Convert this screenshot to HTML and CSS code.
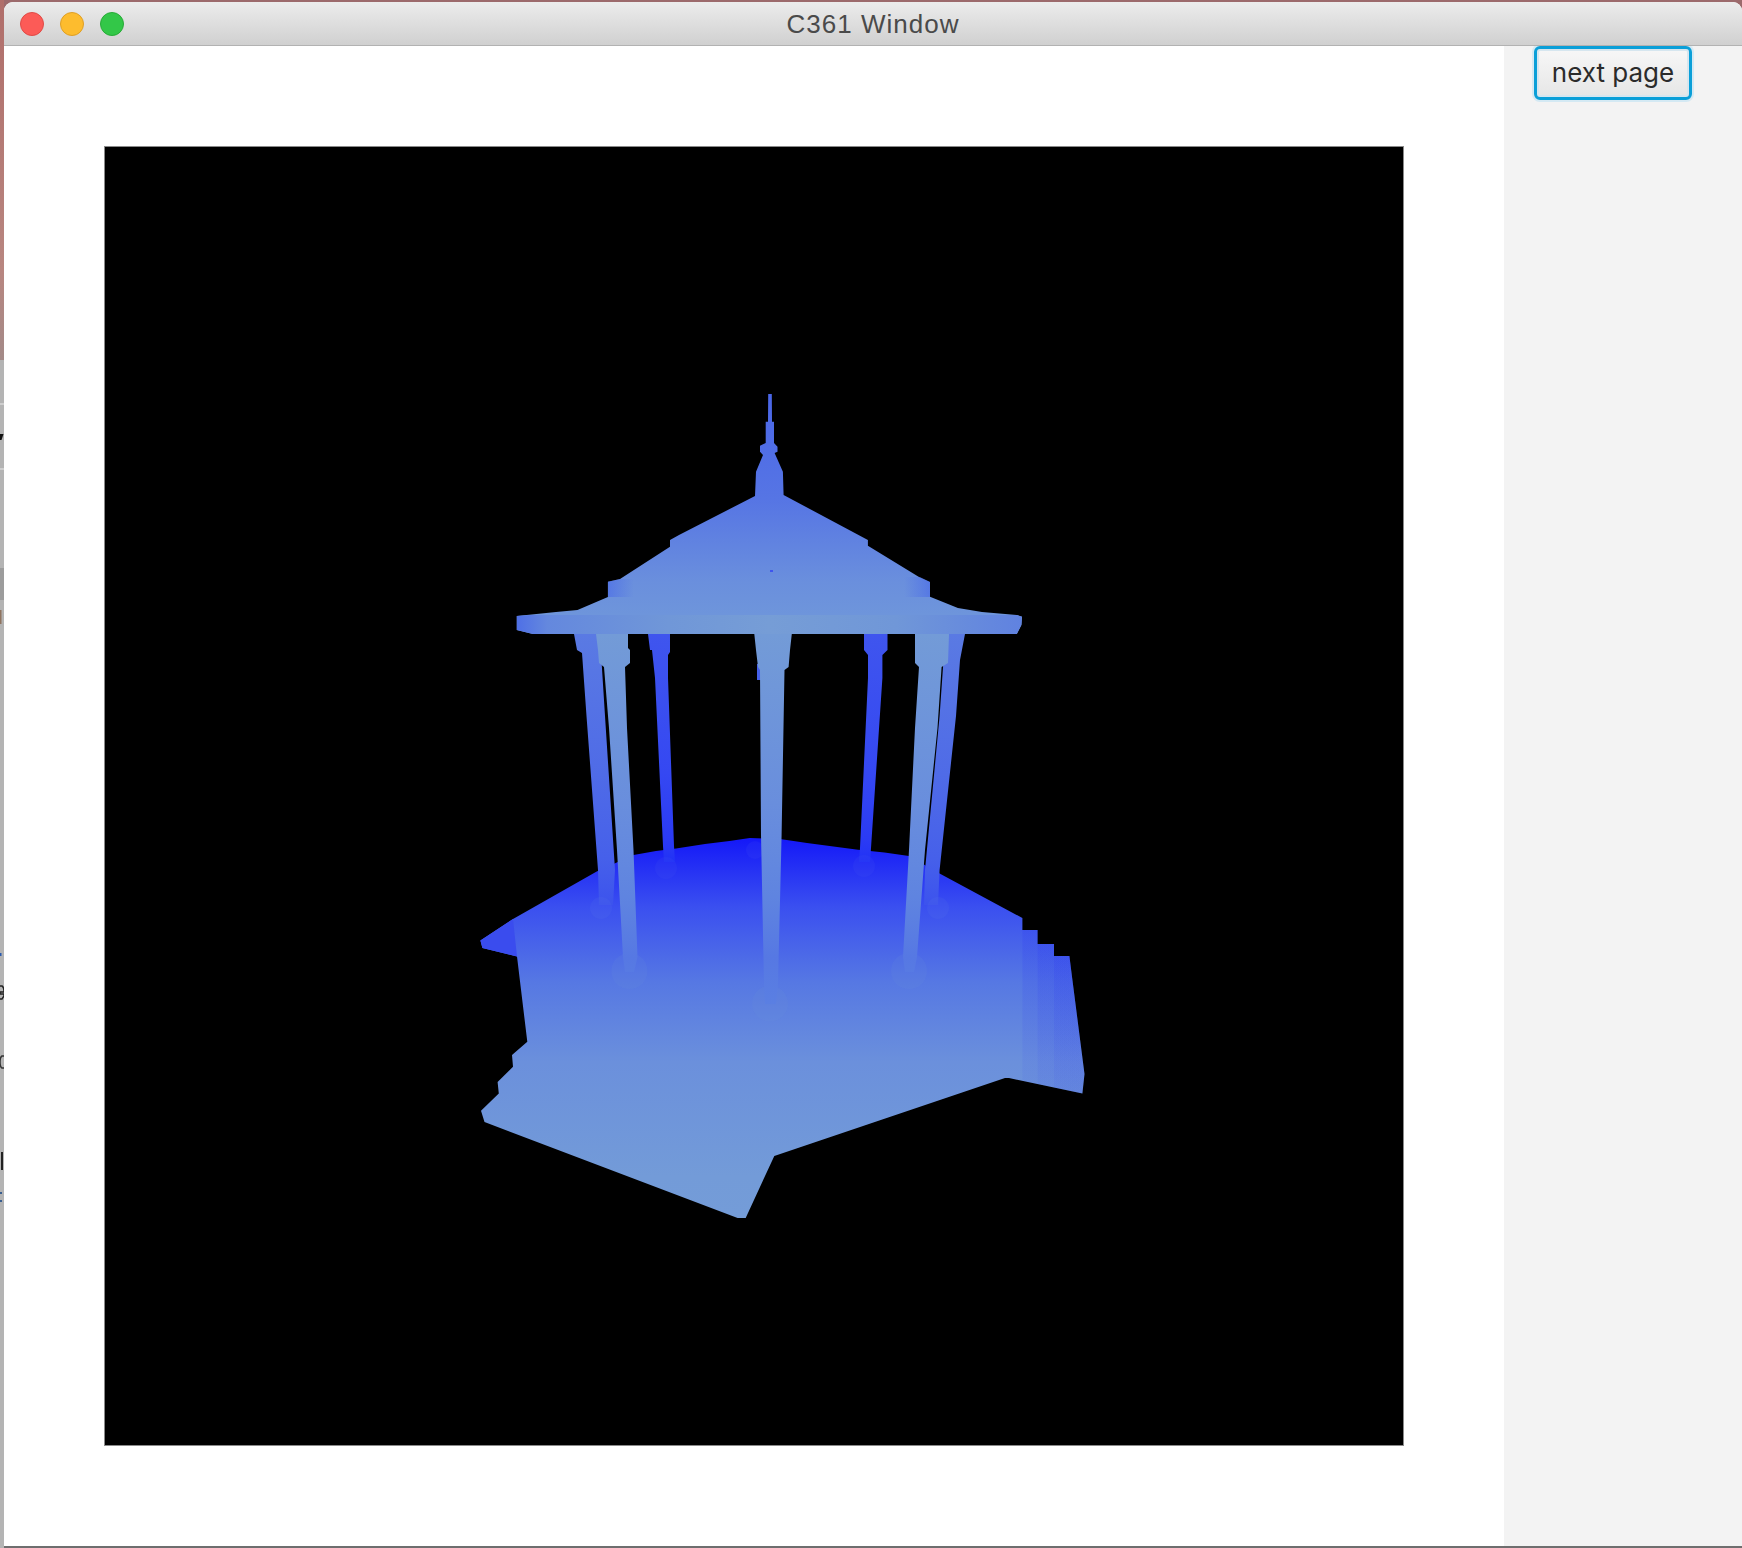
FILE: index.html
```html
<!DOCTYPE html>
<html lang="en">
<head>
<meta charset="utf-8">
<title>C361 Window</title>
<link rel="stylesheet" href="styles.css">
</head>
<body>
<svg class="backdrop" viewBox="0 0 4 1548" aria-hidden="true">
  <defs>
    <linearGradient id="deskRed" x1="0" y1="0" x2="0" y2="1">
      <stop offset="0" stop-color="#b06e6a"/><stop offset=".75" stop-color="#b88680"/><stop offset="1" stop-color="#a38a88"/>
    </linearGradient>
  </defs>
  <rect width="4" height="1548" fill="#b4b4b4"/>
  <rect width="4" height="360" fill="url(#deskRed)"/>
  <rect y="403" width="4" height="2" fill="#cfcfcf"/>
  <rect y="468" width="4" height="2" fill="#cfcfcf"/>
  <rect y="568" width="4" height="32" fill="#9c9c9c"/>
  <rect y="610" width="1.500" height="14" fill="#8f7460"/>
  <path d="M0 434h3.500l-2 6H0z" fill="#111"/>
  <rect y="953" width="1.500" height="3" fill="#2a5bb0"/>
  <path d="M0 986h2q2 1 2 6H0v2h4v2l-2 3H0" fill="none" stroke="#222" stroke-width="1.500"/>
  <path d="M4 1056h-2q-2 1 -2 6q0 5 2 6h2" fill="none" stroke="#333" stroke-width="1.500"/>
  <rect x="1" y="1152" width="2" height="18" fill="#222"/>
  <path d="M0 1192h2v2H0zM0 1200h2v2H0z" fill="#3a5f90"/>
</svg>

<div class="window">
  <header class="titlebar">
    <div class="lights">
      <span class="light light-close"></span>
      <span class="light light-min"></span>
      <span class="light light-max"></span>
    </div>
    <span class="title">C361 Window</span>
  </header>

  <div class="body">
    <main class="stage">
      <svg class="canvas" viewBox="104 146 1300 1300" role="img" aria-label="Depth rendering of a gazebo">
        <defs>
          <linearGradient id="ground" gradientUnits="userSpaceOnUse" x1="0" y1="838" x2="0" y2="1218">
            <stop offset="0" stop-color="#1418f8"/>
            <stop offset=".18" stop-color="#3a4ff0"/>
            <stop offset=".38" stop-color="#5678e3"/>
            <stop offset=".59" stop-color="#6b90dc"/>
            <stop offset=".89" stop-color="#739bd8"/>
            <stop offset="1" stop-color="#749cd8"/>
          </linearGradient>
          <linearGradient id="stepShade" gradientUnits="userSpaceOnUse" x1="0" y1="920" x2="0" y2="1095">
            <stop offset="0" stop-color="#1a1ff6" stop-opacity=".13"/>
            <stop offset="1" stop-color="#1a1ff6" stop-opacity=".04"/>
          </linearGradient>
          <linearGradient id="roof" gradientUnits="userSpaceOnUse" x1="0" y1="394" x2="0" y2="634">
            <stop offset="0" stop-color="#4a66e8"/>
            <stop offset=".44" stop-color="#5675e4"/>
            <stop offset=".78" stop-color="#6a8fdd"/>
            <stop offset=".92" stop-color="#6e95db"/>
            <stop offset="1" stop-color="#769dd6"/>
          </linearGradient>
          <linearGradient id="band" gradientUnits="userSpaceOnUse" x1="517" y1="0" x2="1022" y2="0">
            <stop offset="0" stop-color="#4f70e6"/>
            <stop offset=".06" stop-color="#6488de"/>
            <stop offset=".3" stop-color="#7097d8"/>
            <stop offset=".5" stop-color="#769dd6"/>
            <stop offset=".75" stop-color="#7097d8"/>
            <stop offset="1" stop-color="#6082e0"/>
          </linearGradient>
          <linearGradient id="rim" gradientUnits="userSpaceOnUse" x1="608" y1="0" x2="930" y2="0">
            <stop offset="0" stop-color="#4565ea" stop-opacity=".55"/>
            <stop offset=".08" stop-color="#4565ea" stop-opacity="0"/>
            <stop offset=".92" stop-color="#4565ea" stop-opacity="0"/>
            <stop offset="1" stop-color="#4565ea" stop-opacity=".55"/>
          </linearGradient>
          <linearGradient id="colFront" gradientUnits="userSpaceOnUse" x1="0" y1="634" x2="0" y2="1010">
            <stop offset="0" stop-color="#739bd7"/>
            <stop offset=".45" stop-color="#698edd"/>
            <stop offset=".7" stop-color="#5f84e0"/>
            <stop offset=".86" stop-color="#5678e3"/>
            <stop offset="1" stop-color="#5b80e2"/>
          </linearGradient>
          <linearGradient id="colOuter" gradientUnits="userSpaceOnUse" x1="0" y1="634" x2="0" y2="915">
            <stop offset="0" stop-color="#5a7ae3"/>
            <stop offset=".5" stop-color="#4f6be7"/>
            <stop offset=".8" stop-color="#4660ea"/>
            <stop offset="1" stop-color="#3a50ee"/>
          </linearGradient>
          <linearGradient id="colBack" gradientUnits="userSpaceOnUse" x1="0" y1="634" x2="0" y2="865">
            <stop offset="0" stop-color="#3f55ee"/>
            <stop offset=".6" stop-color="#3548f2"/>
            <stop offset=".9" stop-color="#2a3af4"/>
            <stop offset="1" stop-color="#2030f6"/>
          </linearGradient>
        </defs>

        <!-- ground -->
        <polygon fill="url(#ground)" points="480.400,940.400 513,919 596.700,871.500 633.500,855 656,851 676,848.600 705,844 729.400,841 749.800,838 780,839 807,843 858,849.700 884.500,852.400 909,856 939.600,873.400 1022.400,918 1022.400,930 1037.600,930 1037.600,944 1054,944 1054,956 1069.400,956 1072,976.800 1084.500,1074 1082.400,1093.500 1009,1078 1005,1078 774.300,1155.900 745.700,1217.900 737.600,1217.900 484.500,1122 481,1110.700 498.800,1093.500 497.600,1082 513,1066.700 512,1055 527.300,1041.800 517,956.500 482.400,948"/>
        <polygon class="spike" points="480.400,940.400 513,919 517,956.500 482.400,948"/>
        <polygon fill="url(#stepShade)" points="1022.400,918 1022.400,930 1037.600,930 1037.600,944 1054,944 1054,956 1069.400,956 1072,976.800 1084.500,1074 1082.400,1093.500 1022.400,1080.700"/>
        <polygon fill="url(#stepShade)" points="1037.600,930 1037.600,944 1054,944 1054,956 1069.400,956 1072,976.800 1084.500,1074 1082.400,1093.500 1037.600,1084"/>
        <polygon fill="url(#stepShade)" points="1054,944 1054,956 1069.400,956 1072,976.800 1084.500,1074 1082.400,1093.500 1054,1087.500"/>

        <!-- rear columns -->
        <polygon fill="url(#colBack)" points="648,634 670,634 670,652 668,655 668,678 674,846 675,862 664,862 663,846 655,678 652,650 650,650"/>
        <polygon fill="url(#colBack)" points="864,634 887.500,634 887.500,650 882.400,655 882.400,678 871,848 870,862 859,862 860,848 868,678 868,655 864,650"/>
        <polygon fill="url(#colOuter)" points="574,634 597,634 601,653 605,716 615,870 613,905 599,905 598,870 586.500,716 582,653 577,650"/>
        <polygon fill="url(#colOuter)" points="948,634 965,634 960,660 956,716 939.600,870 938,905 924,905 925,870 939.600,716 944,653"/>
        <rect class="sliver" x="757" y="664" width="4" height="16"/>

        <!-- column feet, faint through the ground -->
        <circle class="foot foot-back" cx="666" cy="868" r="11"/>
        <circle class="foot foot-back" cx="864" cy="866" r="11"/>
        <circle class="foot foot-back" cx="755" cy="850" r="9"/>
        <circle class="foot foot-outer" cx="601" cy="908" r="11"/>
        <circle class="foot foot-outer" cx="938" cy="908" r="11"/>
        <circle class="foot" cx="629.400" cy="971" r="18"/>
        <circle class="foot" cx="909" cy="971" r="18"/>
        <circle class="foot" cx="770" cy="1003.600" r="18"/>

        <!-- front columns -->
        <polygon fill="url(#colFront)" points="596,634 628,634 628,648 630,650 630,663 625,667 627,728 633.500,850 637.500,957 634,972 625,972 623,957 617,850 609,728 604,667 599,663 598,650"/>
        <polygon fill="url(#colFront)" points="915,634 949,634 948,663 941.600,667 937.500,728 925,850 917,957 914,972 905,972 903,957 909,850 915,728 919,667 915,663"/>
        <polygon fill="url(#colFront)" points="754.300,634 791.800,634 790,650 788.600,667 784.500,670 781.600,835 778,984 776,1004 765,1004 764,984 761,835 760,670 758,667 756,650"/>

        <!-- roof -->
        <polygon fill="url(#roof)" points="768.200,394 771.800,394 772,421.700 774,421.700 774,443 777.500,446.700 777.500,451.700 774.600,453 782.900,471.700 783.600,495 867.900,540 867.900,545.700 918.600,576.700 930,582 930,596.700 957.900,608 982,612 1016.800,615 1022,616.700 1021.400,625 1016.800,634 532.900,634 516.800,630 516.800,616 556,612 577.500,610 607.900,597 607.900,581.700 620,579 670,546.700 670,540 679,535 755,496 756,471.700 763,455 760,451.700 760,445.700 765.700,443 765.700,421.700 768,421.700"/>
        <polygon fill="url(#rim)" points="608,581.700 620,579 920,577 930,582 930,597 608,597"/>
        <polygon fill="url(#band)" points="516.800,616 530,615 1016.800,615 1022,616.700 1021.400,625 1016.800,634 532.900,634 516.800,630"/>
        <rect class="speck" x="770" y="570" width="3" height="2"/>
      </svg>
    </main>

    <aside class="sidebar">
      <button class="next-button" type="button">next page</button>
    </aside>
  </div>
</div>
</body>
</html>
```

FILE: styles.css
```css
* {
  box-sizing: border-box;
}

html,
body {
  margin: 0;
  height: 1548px;
  overflow: hidden;
}

body {
  display: flex;
  background: #9c6a6c;
}

.backdrop {
  display: block;
  flex: none;
  width: 4px;
  height: 1548px;
}

.window {
  flex: 1;
  display: flex;
  flex-direction: column;
  margin-top: 2px;
  height: 1546px;
  border-radius: 9px 9px 0 0;
  overflow: hidden;
  background: #fff;
  border-bottom: 2px solid #6e6e6e;
}

.titlebar {
  flex: none;
  position: relative;
  display: flex;
  align-items: center;
  justify-content: center;
  height: 44px;
  padding-top: 2px;
  background: linear-gradient(#ececec, #d0d0d0);
  border-bottom: 1px solid #b2b2b2;
}

.lights {
  position: absolute;
  left: 16px;
  top: 10px;
  display: flex;
  gap: 16px;
}

.light {
  display: block;
  width: 24px;
  height: 24px;
  border-radius: 50%;
  border: 1px solid;
}

.light-close {
  background: #fc5b57;
  border-color: #e04a46;
}

.light-min {
  background: #fdbc2e;
  border-color: #df9f25;
}

.light-max {
  background: #33c748;
  border-color: #28ab37;
}

.title {
  font-family: "Liberation Sans", Arial, sans-serif;
  font-size: 26px;
  letter-spacing: 1px;
  color: #4a4a4a;
}

.body {
  flex: 1;
  display: flex;
  min-height: 0;
}

.stage {
  flex: 1;
  padding: 100px;
  background: #fff;
}

.canvas {
  display: block;
  width: 1300px;
  height: 1300px;
  background: #000;
  outline: 1px solid #8a8a8a;
  outline-offset: -1px;
}

.spike {
  fill: #3a4cee;
}

.sliver {
  fill: #4560ea;
}

.foot {
  fill: #6a8fdc;
  opacity: 0.13;
}

.foot-back {
  fill: #4a60ee;
}

.foot-outer {
  fill: #5a78e4;
}

.speck {
  fill: #3f55ee;
}

.sidebar {
  flex: none;
  width: 238px;
  padding: 0 20px 0 30px;
  background: #f3f3f3;
}

.next-button {
  display: block;
  width: 158px;
  height: 54px;
  padding: 0 0 2px;
  font-family: Inter, "Liberation Sans", sans-serif;
  font-size: 26px;
  color: #2b2b2b;
  border: 3px solid #0a9fd8;
  border-radius: 6px;
  background: linear-gradient(#f7f7f7, #e6e6e6);
  box-shadow: 0 0 0 2px #d4e9f3, inset 0 0 0 2px #d6e6ef;
}
```
